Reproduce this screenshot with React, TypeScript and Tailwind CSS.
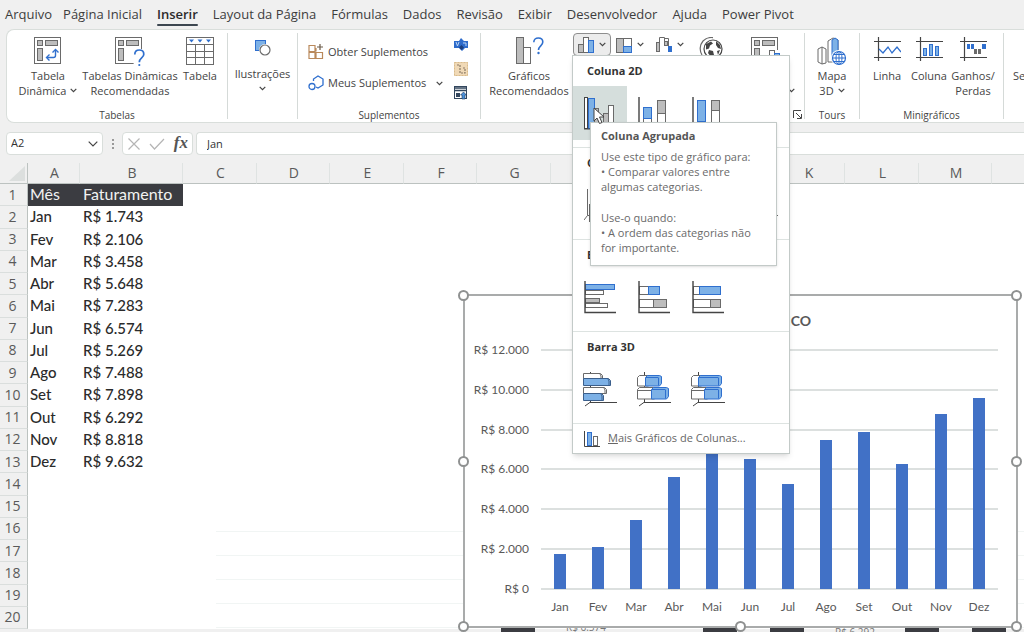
import type { ReactNode } from "react";

const BLUE = "#2f6fce";
const FILL = "#7db1e6";
const GRAY = "#6a6a6a";
const SOFT = "#bdbdbd";
const DARK = "#444444";

/* ---------- small drawing helpers ---------- */

type BoxProps = { x: number; y: number; w: number; h: number; f?: string; s?: string };
const Box = ({ x, y, w, h, f = "#ffffff", s = GRAY }: BoxProps) => (
  <rect x={x + 0.5} y={y + 0.5} width={w - 1} height={h - 1} fill={f} stroke={s} />
);

const Icon = ({ w, h, children }: { w: number; h: number; children: ReactNode }) => (
  <svg width={w} height={h} viewBox={`0 0 ${w} ${h}`} fill="none" className="block shrink-0" aria-hidden="true">
    {children}
  </svg>
);

const Chevron = () => (
  <svg width="7" height="5" viewBox="0 0 7 5" fill="none" className="inline-block shrink-0" aria-hidden="true">
    <path d="M0.7 0.8 3.5 3.6 6.3 0.8" stroke={DARK} strokeWidth="1.2" />
  </svg>
);

/* ---------- ribbon icons ---------- */

const PivotFrame = () => (
  <>
    <Box x={0} y={0} w={27} h={27} />
    <Box x={3} y={3} w={6} h={6} f={SOFT} />
    <Box x={11} y={3} w={13} h={6} f={SOFT} />
    <Box x={3} y={11} w={6} h={13} f={SOFT} />
  </>
);

const PivotIcon = () => (
  <Icon w={28} h={28}>
    <PivotFrame />
    <path d="M13 20.5h6.500a2 2 0 0 0 2-2V13" stroke={BLUE} strokeWidth="1.4" />
    <path d="M15.500 17.500l-3 3 3 3M18.500 15.500l3-3 3 3" stroke={BLUE} strokeWidth="1.4" />
  </Icon>
);

const RecommendedPivotIcon = () => (
  <Icon w={30} h={30}>
    <PivotFrame />
    <path d="M17 12h13v18H19z" fill="#ffffff" />
    <path
      d="M19.800 17.500c0-3 2-4.500 4.500-4.500s4.500 1.600 4.500 4.200c0 3.800-4.500 3.800-4.500 8"
      stroke={BLUE}
      strokeWidth="1.700"
    />
    <circle cx="24.300" cy="28" r="1.100" fill={BLUE} />
  </Icon>
);

const TableIcon = () => (
  <Icon w={28} h={28}>
    <Box x={0} y={0} w={28} h={28} />
    <path d="M0 7.500h28M0 14.500h28M0 20.500h28M9.500 7v21M18.500 7v21" stroke={GRAY} />
    <path d="M3 2.500h5L5.500 5.500zM11.500 2.500h5L14 5.500zM20 2.500h5l-2.500 3z" fill={BLUE} />
  </Icon>
);

const ShapesIcon = () => (
  <Icon w={18} h={18}>
    <Box x={1} y={1} w={11} h={11} f={FILL} s={BLUE} />
    <circle cx="11" cy="11" r="6" fill="#ffffff" />
    <circle cx="11" cy="11" r="5" fill="#ffffff" stroke={GRAY} strokeWidth="1.200" />
  </Icon>
);

const StoreIcon = () => (
  <Icon w={16} h={16}>
    <path d="M1 1.500h6v6H1zM1 8.500h6v6H1zM8 8.500h6.500v6H8zM8 7.500V4" stroke="#b9895b" strokeWidth="1.200" />
    <path d="M12 0v6M9 3h6" stroke="#6b5a48" strokeWidth="1.200" />
  </Icon>
);

const AddinsIcon = () => (
  <Icon w={16} h={16}>
    <path d="M5.500 6V4L10 1l5 3v6l-5 3-2-1" stroke={BLUE} strokeWidth="1.300" />
    <circle cx="4" cy="11.500" r="3" stroke={BLUE} strokeWidth="1.300" />
  </Icon>
);

const VisioIcon = () => (
  <Icon w={14} h={14}>
    <path d="M0 3h5l2-3 3 3h4v7h-3l-3 3-3-3H0z" fill="#2d6bcb" />
    <path d="M2 4l1.500 4L5 4M9 5h3v3" stroke="#bcd6f5" />
    <path d="M7.500 7l2.500 2.500L7.500 12 5 9.500z" fill="#1c3f7d" />
  </Icon>
);

const BingIcon = () => (
  <Icon w={14} h={14}>
    <rect width="14" height="14" fill="#f0d9b6" />
    <path d="M3 3h3v8h5V6H8" stroke="#8b7b66" strokeWidth="1.200" strokeDasharray="2 1" />
    <path d="M0.500 0.500h13v13h-13z" stroke="#d9bb8d" strokeDasharray="2 1" />
  </Icon>
);

const PeopleIcon = () => (
  <Icon w={14} h={14}>
    <rect x="0.500" y="0.500" width="12" height="12" fill="#ffffff" stroke="#33475e" />
    <path d="M0 2h13M0 4.500h13" stroke="#33475e" strokeWidth="1.500" />
    <path d="M2 7h4v4H2z" fill="#33475e" />
    <path d="M9.500 6l3 3h-1.500v4H8V9H6.500z" fill="#4a90d9" stroke="#1d3557" strokeWidth="0.600" />
  </Icon>
);

const RecommendedChartIcon = () => (
  <Icon w={29} h={28}>
    <Box x={1} y={0} w={8} h={27} f={SOFT} />
    <Box x={8} y={10} w={8} h={17} />
    <path
      d="M18.800 5.200C18.800 2.400 20.800 1 23.300 1s4.500 1.500 4.500 4c0 3.700-4.300 4-4.300 8"
      stroke={BLUE}
      strokeWidth="1.600"
    />
    <circle cx="23.500" cy="16" r="1.200" fill={BLUE} />
  </Icon>
);

const ColumnsIcon = () => (
  <Icon w={16} h={16}>
    <Box x={0} y={7} w={6} h={9} f={SOFT} />
    <Box x={5} y={0} w={6} h={16} />
    <Box x={10} y={3} w={6} h={13} f={FILL} s={BLUE} />
  </Icon>
);

const HierarchyIcon = () => (
  <Icon w={16} h={16}>
    <Box x={0} y={1} w={8} h={15} f={SOFT} />
    <Box x={7} y={1} w={9} h={9} />
    <Box x={7} y={9} w={9} h={7} f={FILL} s={BLUE} />
  </Icon>
);

const WaterfallIcon = () => (
  <Icon w={16} h={16}>
    <Box x={0} y={5} w={4} h={10} f={SOFT} />
    <path d="M3.500 8V0.500h5V8" fill="#ffffff" stroke={GRAY} />
    <path d="M8 1.500h4.500V10" stroke={GRAY} />
    <Box x={8} y={4} w={4} h={5} f={SOFT} />
    <rect x="12" y="9" width="4" height="6" fill={BLUE} />
  </Icon>
);

const GlobeMapIcon = () => (
  <Icon w={25} h={28}>
    <path d="M4 4A12 12 0 0 1 14 0.600M4 4a12 12 0 0 0-1 14" stroke={GRAY} strokeWidth="1.200" />
    <circle cx="14" cy="12" r="9" fill="#ffffff" stroke={DARK} strokeWidth="1.200" />
    <path
      d="M7 7l5-2.500 2 2-3 2-1 3-3 1zM17 4l4 4 1 4-3-1-2-3zM10 13l4 1 1 4-3 2-3-4zM18 14l3-1-2 5z"
      fill={DARK}
    />
    <path d="M5 20c4 5 14 5 18-1M14 24v4M9 27.500h10" stroke={GRAY} />
  </Icon>
);

const PivotChartIcon = () => (
  <Icon w={29} h={28}>
    <PivotFrame />
    <rect x="18" y="13" width="11" height="15" fill="#ffffff" />
    <Box x={13} y={18} w={6} h={9} f={SOFT} />
    <Box x={18} y={13} w={6} h={14} />
    <Box x={23} y={16} w={6} h={11} f={FILL} s={BLUE} />
  </Icon>
);

const Map3DIcon = () => (
  <Icon w={30} h={30}>
    <path d="M1 12l4-2 4 2v14l-4 1-4-2z" fill="#ffffff" stroke={GRAY} />
    <path d="M5 10v17" stroke={GRAY} />
    <path d="M11 4l5-3 5 2v22H11z" fill="#ffffff" stroke={GRAY} />
    <path d="M15 3l3-2 3 2v20h-6z" fill={FILL} stroke={BLUE} />
    <circle cx="22" cy="21" r="8" fill="#ffffff" />
    <circle cx="22" cy="21" r="6.500" stroke={BLUE} strokeWidth="1.200" />
    <ellipse cx="22" cy="21" rx="3" ry="6.500" stroke={BLUE} />
    <path d="M15.500 21h13M17 17.500h10M17 24.500h10M22 14.500v13" stroke={BLUE} />
  </Icon>
);

const SparkFrame = () => (
  <path d="M0 4.500h27M0 20.500h27M4.500 0v24" stroke={DARK} strokeWidth="1.200" />
);

const SparkLineIcon = () => (
  <Icon w={27} h={25}>
    <SparkFrame />
    <path d="M5 12l4 4 5-6 4 6 5-6 4 5" stroke={BLUE} strokeWidth="1.300" />
  </Icon>
);

const SparkColumnIcon = () => (
  <Icon w={27} h={25}>
    <SparkFrame />
    <Box x={7} y={11} w={4} h={8} f={FILL} s={BLUE} />
    <Box x={13} y={7} w={4} h={12} f={FILL} s={BLUE} />
    <Box x={19} y={9} w={4} h={10} f={FILL} s={BLUE} />
  </Icon>
);

const SparkWinLossIcon = () => (
  <Icon w={27} h={25}>
    <SparkFrame />
    <path d="M7 7h3v5H7zM11 7h3v5h-3zM22 7h4v5h-4z" fill={BLUE} />
    <path d="M14 12h3v5h-3zM18 12h3v5h-3z" fill={GRAY} />
  </Icon>
);

const LauncherIcon = () => (
  <Icon w={9} h={9}>
    <path d="M0.500 8V0.500H8M3 3l5 5M8.500 4v4.500H4" stroke={DARK} />
  </Icon>
);

/* ---------- chart gallery icons ---------- */

const Axes = () => <path d="M1 0v31.500h31" stroke={DARK} strokeWidth="1.400" />;

const columnIcons = [
  <Icon key="a" w={32} h={33}>
    <Box x={0} y={0} w={4} h={32} f="#ffffff" s={DARK} />
    <Box x={4} y={1} w={7} h={31} f={FILL} s={BLUE} />
    <Box x={10} y={11} w={5} h={21} f={SOFT} />
    <Box x={19} y={16} w={6} h={16} f={SOFT} />
    <Box x={24} y={8} w={6} h={24} />
    <path d="M0 32h32" stroke={DARK} />
  </Icon>,
  <Icon key="b" w={32} h={33}>
    <Axes />
    <Box x={5} y={21} w={9} h={11} />
    <Box x={5} y={10} w={9} h={12} f={FILL} s={BLUE} />
    <Box x={19} y={13} w={9} h={19} />
    <Box x={19} y={3} w={9} h={14} f={SOFT} />
  </Icon>,
  <Icon key="c" w={32} h={33}>
    <Axes />
    <Box x={5} y={24} w={9} h={8} />
    <Box x={5} y={3} w={9} h={22} f={FILL} s={BLUE} />
    <Box x={19} y={13} w={9} h={19} />
    <Box x={19} y={3} w={9} h={11} f={SOFT} />
  </Icon>,
];

const Column3D = () => (
  <Icon w={32} h={33}>
    <path d="M3.500 0v26.500H32M3.500 26.500L0 31" stroke={GRAY} />
    <Box x={5} y={15} w={6} h={18} />
    <Box x={12} y={8} w={6} h={20} f={FILL} s={BLUE} />
    <Box x={20} y={12} w={6} h={16} f={SOFT} />
  </Icon>
);

const barIcons = [
  <Icon key="a" w={32} h={33}>
    <Box x={1} y={3} w={30} h={6} f={FILL} s={BLUE} />
    <Box x={1} y={9} w={19} h={5} />
    <Box x={1} y={17} w={15} h={5} f={SOFT} />
    <Box x={1} y={22} w={23} h={5} />
    <Axes />
  </Icon>,
  <Icon key="b" w={32} h={33}>
    <Box x={1} y={5} w={11} h={9} />
    <Box x={10} y={5} w={12} h={9} f={FILL} s={BLUE} />
    <Box x={1} y={18} w={15} h={9} />
    <Box x={15} y={18} w={14} h={9} f={SOFT} />
    <Axes />
  </Icon>,
  <Icon key="c" w={32} h={33}>
    <Box x={1} y={5} w={7} h={9} />
    <Box x={7} y={5} w={22} h={9} f={FILL} s={BLUE} />
    <Box x={1} y={18} w={18} h={9} />
    <Box x={18} y={18} w={11} h={9} f={SOFT} />
    <Axes />
  </Icon>,
];

const Floor = () => <path d="M7.500 0v30L2 34M7 30.500h27" stroke={DARK} />;
type Bar3DProps = { x: number; y: number; w: number; h: number; f?: string; s?: string; cap?: boolean };
const Bar3D = ({ x, y, w, h, f = "#ffffff", s = GRAY, cap = true }: Bar3DProps) => (
  <>
    <path
      d={`M${x + 0.5} ${y + 2.5}l2-2h${w - 3}l2 1v${h - 4}l-2 2.500h-${w - 1}z`}
      fill={f}
      stroke={s}
      strokeLinejoin="round"
    />
    {cap && <path d={`M${x + 1} ${y + 2.5}h${w - 3}M${x + w - 1.5} ${y + 2.5}v${h - 3}`} stroke={s} />}
  </>
);
/* a bar whose left end is flush with the wall */
const WallBar = ({ y, w, h, f = "#ffffff", s = GRAY }: Omit<Bar3DProps, "x" | "cap">) => (
  <path
    d={`M0.500 ${y + 0.5}h${w - 3}l2 2v${h - 3}h-${w - 1}zM${w - 3} ${y + 1}l1 2v${h - 3}`}
    fill={f}
    stroke={s}
    strokeLinejoin="round"
  />
);

const bar3DIcons = [
  <Icon key="a" w={34} h={35}>
    <Floor />
    <WallBar y={1} w={20} h={6} />
    <WallBar y={6} w={28} h={8} f={FILL} s="#3b5f8c" />
    <WallBar y={15} w={24} h={7} />
    <WallBar y={21} w={21} h={8} f={FILL} s="#3b5f8c" />
  </Icon>,
  <Icon key="b" w={34} h={35}>
    <Floor />
    <Bar3D x={0} y={3} w={12} h={11} cap={false} />
    <Bar3D x={8} y={3} w={15} h={11} f={FILL} s={BLUE} />
    <Bar3D x={0} y={15} w={18} h={12} cap={false} />
    <path d="M1 18.500h14" stroke={GRAY} />
    <Bar3D x={14} y={15} w={16} h={12} f={FILL} s={BLUE} />
  </Icon>,
  <Icon key="c" w={34} h={35}>
    <Floor />
    <Bar3D x={0} y={3} w={11} h={11} cap={false} />
    <Bar3D x={7} y={3} w={22} h={11} f={FILL} s={BLUE} />
    <Bar3D x={0} y={15} w={17} h={12} cap={false} />
    <path d="M1 18.500h13" stroke={GRAY} />
    <Bar3D x={13} y={15} w={16} h={12} f={FILL} s={BLUE} />
  </Icon>,
];

/* ---------- ribbon ---------- */

const tabs = [
  "Página Inicial",
  "Inserir",
  "Layout da Página",
  "Fórmulas",
  "Dados",
  "Revisão",
  "Exibir",
  "Desenvolvedor",
  "Ajuda",
  "Power Pivot",
];

const TabBar = () => (
  <nav className="flex h-[29px] shrink-0 gap-[15px] whitespace-nowrap pl-[5px] text-[13px] leading-[28px] text-[#3d3d3d]">
    <a href="#arquivo" className="-mr-[4px]">
      Arquivo
    </a>
    {tabs.map((tab) =>
      tab === "Inserir" ? (
        <a key={tab} href="#inserir" aria-current="page" className="relative font-semibold text-[#2b2b2b]">
          {tab}
          <span className="absolute inset-x-0 bottom-[3px] h-[2px] rounded bg-[#3c4650]" />
        </a>
      ) : (
        <a key={tab} href="#aba">
          {tab}
        </a>
      ),
    )}
  </nav>
);

const Group = ({ width, label, children }: { width: string; label?: string; children: ReactNode }) => (
  <section className={`relative my-[3px] flex shrink-0 flex-col border-r border-[#d5dad8] ${width}`}>
    <div className="flex min-h-0 flex-1 items-start">{children}</div>
    {label && <h2 className="text-center text-[10px] leading-[8px]">{label}</h2>}
  </section>
);

type BigProps = { icon: ReactNode; lines: string[]; width: string; drop?: boolean };
const BigButton = ({ icon, lines, width, drop }: BigProps) => (
  <button type="button" className={`flex shrink-0 flex-col items-center pt-[4px] leading-[15px] ${width}`}>
    <span className="flex h-[31px] items-start">{icon}</span>
    {lines.map((line, i) => (
      <span key={line} className="flex items-center gap-[4px] whitespace-nowrap">
        {line}
        {drop && i === lines.length - 1 && <Chevron />}
      </span>
    ))}
  </button>
);

const MenuSection = ({ title, children }: { title: string; children: ReactNode }) => (
  <section className="h-[92px] border-b border-[#dde3e1]">
    <h3 className="pl-[14px] text-[11px] font-bold leading-[30px] text-[#333333]">{title}</h3>
    <div className="flex">{children}</div>
  </section>
);

const GalleryItem = ({ label, children }: { label: string; children: ReactNode }) => (
  <button type="button" aria-label={label} className="flex h-[54px] w-[54px] items-center justify-center">
    {children}
  </button>
);

const Tooltip = () => (
  <div
    role="tooltip"
    className="absolute left-[17px] top-[66px] z-10 w-[187px] border border-[#c3cac8] bg-white px-[10px] pb-[10px] pt-[5px] text-[11px] leading-[15px] text-[#6a6a6a] shadow"
  >
    <p className="mb-[6px] font-bold text-[#555555]">Coluna Agrupada</p>
    <p>Use este tipo de gráfico para:</p>
    <p>• Comparar valores entre algumas categorias.</p>
    <p className="mt-[16px]">Use-o quando:</p>
    <p>• A ordem das categorias não for importante.</p>
  </div>
);

const labels = ["Agrupada", "Empilhada", "100% Empilhada"];

const ColumnMenu = () => (
  <div className="absolute left-[-1px] top-[22px] z-30 w-[218px] border border-[#c3cac8] bg-white text-left shadow-md">
    <MenuSection title="Coluna 2D">
      <button
        type="button"
        aria-label="Coluna Agrupada"
        className="flex h-[54px] w-[54px] items-center justify-center bg-[#d5dedc]"
      >
        {columnIcons[0]}
      </button>
      <GalleryItem label="Coluna Empilhada">{columnIcons[1]}</GalleryItem>
      <GalleryItem label="Coluna 100% Empilhada">{columnIcons[2]}</GalleryItem>
    </MenuSection>
    <MenuSection title="Coluna 3D">
      {[...labels, "3D"].map((l) => (
        <GalleryItem key={l} label={`Coluna 3D ${l}`}>
          <Column3D />
        </GalleryItem>
      ))}
    </MenuSection>
    <MenuSection title="Barra 2D">
      {barIcons.map((icon, i) => (
        <GalleryItem key={labels[i]} label={`Barra ${labels[i]}`}>
          {icon}
        </GalleryItem>
      ))}
    </MenuSection>
    <MenuSection title="Barra 3D">
      {bar3DIcons.map((icon, i) => (
        <GalleryItem key={labels[i]} label={`Barra 3D ${labels[i]}`}>
          {icon}
        </GalleryItem>
      ))}
    </MenuSection>
    <button type="button" className="flex h-[29px] w-full items-center gap-[8px] pl-[11px] text-[11px] text-[#666666]">
      <Icon w={16} h={16}>
        <path d="M0.500 0v15.500H16" stroke={DARK} />
        <Box x={3} y={1} w={5} h={14} f={FILL} s={BLUE} />
        <Box x={9} y={5} w={5} h={10} />
      </Icon>
      <span>
        <u>M</u>ais Gráficos de Colunas...
      </span>
    </button>
    <Tooltip />
    <svg
      width="12"
      height="18"
      viewBox="0 0 12 18"
      className="absolute left-[20px] top-[51px] z-20"
      aria-hidden="true"
    >
      <path d="M1 1v13l3-3 2.500 5.500 2.500-1L6.500 10H11z" fill="#ffffff" stroke="#444444" />
    </svg>
  </div>
);

const ChartButtons = () => (
  <div className="flex gap-[4px] pl-[1px]">
    <div className="relative">
      <button
        type="button"
        aria-label="Gráfico de Colunas ou Barras"
        aria-expanded="true"
        className="flex h-[23px] w-[38px] items-center justify-center gap-[5px] rounded-[4px] border border-[#8e8e8e] bg-[#ececec]"
      >
        <ColumnsIcon />
        <Chevron />
      </button>
      <ColumnMenu />
    </div>
    <button type="button" aria-label="Gráfico de Hierarquia" className="flex h-[23px] w-[36px] items-center gap-[5px] pl-[1px]">
      <HierarchyIcon />
      <Chevron />
    </button>
    <button type="button" aria-label="Gráfico de Cascata" className="flex h-[23px] w-[36px] items-center gap-[5px] pl-[1px]">
      <WaterfallIcon />
      <Chevron />
    </button>
  </div>
);

const Ribbon = () => (
  <div className="relative z-20 ml-[6px] flex h-[94px] shrink-0 rounded-l-[8px] border border-r-0 border-[#d9dedb] bg-white text-[11px] text-[#444444]">
    <Group width="w-[221px]" label="Tabelas">
      <div className="flex pl-[9px]">
        <BigButton icon={<PivotIcon />} lines={["Tabela", "Dinâmica"]} width="w-[64px]" drop />
        <BigButton icon={<RecommendedPivotIcon />} lines={["Tabelas Dinâmicas", "Recomendadas"]} width="w-[100px]" />
        <BigButton icon={<TableIcon />} lines={["Tabela"]} width="w-[40px]" />
      </div>
    </Group>
    <Group width="w-[70px]">
      <button type="button" className="flex w-full flex-col items-center gap-[5px] pt-[6px] leading-[15px]">
        <ShapesIcon />
        <span className="pt-[4px]">Ilustrações</span>
        <Chevron />
      </button>
    </Group>
    <Group width="w-[183px]" label="Suplementos">
      <div className="flex w-[145px] flex-col gap-[7px] pl-[10px] pt-[7px]">
        <button type="button" className="flex h-[24px] items-center gap-[4px] whitespace-nowrap">
          <StoreIcon />
          Obter Suplementos
        </button>
        <button type="button" className="flex h-[24px] items-center gap-[4px] whitespace-nowrap">
          <AddinsIcon />
          <span className="flex-1 text-left">Meus Suplementos</span>
          <Chevron />
        </button>
      </div>
      <div className="flex flex-col gap-[10px] pl-[11px] pt-[5px]">
        <button type="button" aria-label="Visio">
          <VisioIcon />
        </button>
        <button type="button" aria-label="Bing Mapas">
          <BingIcon />
        </button>
        <button type="button" aria-label="Gráfico de Pessoas">
          <PeopleIcon />
        </button>
      </div>
    </Group>
    <Group width="w-[324px]" label="Gráficos">
      <BigButton icon={<RecommendedChartIcon />} lines={["Gráficos", "Recomendados"]} width="ml-[5px] w-[86px]" />
      <ChartButtons />
      <BigButton icon={<GlobeMapIcon />} lines={["Mapas"]} width="w-[40px]" drop />
      <BigButton icon={<PivotChartIcon />} lines={["Gráfico", "Dinâmico"]} width="w-[68px]" drop />
      <button type="button" aria-label="Todos os gráficos" className="absolute bottom-[0px] right-[2px]">
        <LauncherIcon />
      </button>
    </Group>
    <Group width="w-[55px]" label="Tours">
      <BigButton icon={<Map3DIcon />} lines={["Mapa", "3D"]} width="w-full" drop />
    </Group>
    <Group width="w-[144px]" label="Minigráficos">
      <div className="flex pl-[6px]">
        <BigButton icon={<SparkLineIcon />} lines={["Linha"]} width="w-[42px]" />
        <BigButton icon={<SparkColumnIcon />} lines={["Coluna"]} width="w-[42px]" />
        <BigButton icon={<SparkWinLossIcon />} lines={["Ganhos/", "Perdas"]} width="w-[46px]" />
      </div>
    </Group>
    <div className="min-w-0 flex-1 overflow-hidden pl-[9px] pt-[38px] leading-[15px]">Segmentação</div>
  </div>
);

/* ---------- formula bar ---------- */

const FormulaBar = () => (
  <div className="flex h-[40px] shrink-0 pt-[9px] text-[11px] text-[#333333]">
    <div className="ml-[6px] flex h-[23px] w-[97px] items-center rounded-[4px] border border-[#d9dedb] bg-white pl-[4px] pr-[4px]">
      <input aria-label="Caixa de nome" defaultValue="A2" className="w-full min-w-0 bg-transparent outline-none" />
      <button type="button" aria-label="Abrir lista de nomes">
        <Icon w={10} h={6}>
          <path d="M0.700 0.700L5 5l4.300-4.300" stroke={DARK} strokeWidth="1.200" />
        </Icon>
      </button>
    </div>
    <div className="flex h-[23px] w-[19px] flex-col items-center justify-center gap-[2px]">
      <span className="h-[2px] w-[2px] bg-[#999999]" />
      <span className="h-[2px] w-[2px] bg-[#999999]" />
      <span className="h-[2px] w-[2px] bg-[#999999]" />
    </div>
    <div className="flex h-[23px] w-[71px] items-center justify-between rounded-[4px] border border-[#d9dedb] bg-white px-[4px]">
      <button type="button" aria-label="Cancelar">
        <Icon w={14} h={14}>
          <path d="M1.500 1.500l11 11M12.500 1.500l-11 11" stroke="#b5b5b5" strokeWidth="1.200" />
        </Icon>
      </button>
      <button type="button" aria-label="Inserir">
        <Icon w={16} h={12}>
          <path d="M1 6l4.500 5L15 1" stroke="#b5b5b5" strokeWidth="1.200" />
        </Icon>
      </button>
      <button
        type="button"
        className="pb-[2px] font-['Liberation_Serif',serif] text-[17px] font-bold italic leading-[18px] text-[#555555]"
      >
        fx
      </button>
    </div>
    <input
      aria-label="Barra de fórmulas"
      defaultValue="Jan"
      className="ml-[3px] h-[23px] min-w-0 flex-1 rounded-l-[4px] border border-r-0 border-[#d9dedb] bg-white pl-[10px] outline-none"
    />
  </div>
);

/* ---------- sheet ---------- */

const months = [
  { name: "Jan", value: 1743 },
  { name: "Fev", value: 2106 },
  { name: "Mar", value: 3458 },
  { name: "Abr", value: 5648 },
  { name: "Mai", value: 7283 },
  { name: "Jun", value: 6574 },
  { name: "Jul", value: 5269 },
  { name: "Ago", value: 7488 },
  { name: "Set", value: 7898 },
  { name: "Out", value: 6292 },
  { name: "Nov", value: 8818 },
  { name: "Dez", value: 9632 },
];

const money = (n: number) => "R$ " + String(n).replace(/(\d)(\d{3})$/, "$1.$2");

const otherColumns = "CDEFGHIJKLMN".split("");
const rowNumbers = Array.from({ length: 20 }, (_, i) => i + 1);

const Grid = () => (
  <table className="h-[466px] w-[1066px] table-fixed border-separate border-spacing-0 bg-white text-left">
    <colgroup>
      <col className="w-[28px]" />
      <col className="w-[52px]" />
      <col className="w-[103px]" />
      {otherColumns.map((c) => (
        <col key={c} />
      ))}
    </colgroup>
    <thead>
      <tr className="h-[21px] bg-[#f0f0f0] text-center text-[14px] leading-[18px] text-[#5a5a5a]">
        <th scope="col" aria-label="Selecionar tudo" className="border-b border-r border-[#bcc2c0] p-0">
          <svg width="16" height="15" viewBox="0 0 16 15" className="ml-[9px] block" aria-hidden="true">
            <path d="M16 0v15H0z" fill="#dcdfde" />
          </svg>
        </th>
        {["A", "B", ...otherColumns].map((c) => (
          <th
            key={c}
            scope="col"
            className="border-b border-r border-b-[#bcc2c0] border-r-[#dfe3e2] p-0 pl-[2px] font-normal"
          >
            {c}
          </th>
        ))}
      </tr>
    </thead>
    <tbody className="font-['Lato',sans-serif] leading-[16px] text-[#2b2b2b]">
      {rowNumbers.map((n) => {
        const month = months[n - 2];
        return (
          <tr key={n}>
            <th
              scope="row"
              className="border-b border-r border-b-[#dadedd] border-r-[#bcc2c0] bg-[#f0f0f0] p-0 pr-[2px] text-center font-['Open_Sans',sans-serif] text-[14px] font-normal leading-[18px] text-[#5a5a5a]"
            >
              {n}
            </th>
            {n === 1 ? (
              <>
                <td className="bg-[#3b3c41] p-0 pb-[2px] pl-[2px] text-[16px] text-[#f2f2f2]">Mês</td>
                <td className="bg-[#3b3c41] p-0 pb-[2px] pl-[3px] text-[16px] text-[#f2f2f2]">Faturamento</td>
              </>
            ) : (
              <>
                <td className="p-0 pb-[2px] pl-[2px] text-[15px] font-medium">{month?.name}</td>
                <td className="p-0 pb-[2px] pl-[3px] text-[15px] font-medium">{month && money(month.value)}</td>
              </>
            )}
            <td colSpan={12} className="p-0" />
          </tr>
        );
      })}
    </tbody>
  </table>
);

const Chart = () => (
  <figure className="absolute left-[463px] top-[131px] h-[334px] w-[555px] border-2 border-[#a9abab] bg-white">
    <svg
      width="551"
      height="330"
      viewBox="0 0 551 330"
      className="block font-['Lato',sans-serif]"
      role="img"
      aria-label="Faturamento por mês"
    >
      <text x="346" y="30" textAnchor="end" fontSize="14" fontWeight="700" fill="#595959">
        TÍTULO DO GRÁFICO
      </text>
      {[0, 1, 2, 3, 4, 5, 6].map((i) => {
        const y = Math.round(293 - i * 39.85);
        return (
          <g key={i}>
            <rect x="76" y={y - 1} width="457" height="2" fill="#dce0df" />
            <text x="64" y={y + 4} textAnchor="end" fontSize="12" fill="#595959">
              {i === 0 ? "R$ 0" : money(i * 2000)}
            </text>
          </g>
        );
      })}
      {months.map((m, i) => {
        const x = Math.round(95 + i * 38.05);
        const h = Math.round((m.value / 2000) * 39.7);
        return (
          <g key={m.name}>
            <rect x={x - 6} y={293 - h} width="12" height={h} fill="#4171c6" />
            <text x={x} y="315" textAnchor="middle" fontSize="12" fill="#595959">
              {m.name}
            </text>
          </g>
        );
      })}
    </svg>
    {[
      "left-[-7px] top-[-6px]",
      "right-[-6px] top-[-6px]",
      "left-[-7px] top-[160px]",
      "right-[-6px] top-[160px]",
      "left-[-7px] bottom-[-6px]",
      "left-[270px] bottom-[-6px]",
      "right-[-6px] bottom-[-6px]",
    ].map((place) => (
      <span key={place} className={`absolute size-[11px] rounded-full border-2 border-[#8f9191] bg-white ${place}`} />
    ))}
  </figure>
);

const LowerTable = () => (
  <div className="absolute left-[501px] top-[463px] flex h-[20px] w-[505px] items-start text-[10px] leading-[10px] text-[#777777]">
    <span className="h-full w-[34px] bg-[#3b3c41]" />
    <span className="-mt-[4px] ml-[31px] w-[137px]">R$ 6.574</span>
    <span className="h-full w-[34px] bg-[#3b3c41]" />
    <span className="ml-[33px] h-full w-[34px] bg-[#3b3c41]" />
    <span className="ml-[31px] mt-[1px] w-[70px]">R$ 6.292</span>
    <span className="h-full w-[34px] bg-[#3b3c41]" />
    <span className="ml-[33px] h-full w-[34px] bg-[#3b3c41]" />
  </div>
);

const Sheet = () => (
  <main className="relative min-h-0 flex-1 overflow-hidden">
    <Grid />
    <div className="absolute left-[216px] right-0 top-[368px]">
      {[16, 17, 18, 19, 20].map((n) => (
        <div key={n} className="h-[24px] border-t border-[#f1f5f4]" />
      ))}
    </div>
    <LowerTable />
    <Chart />
  </main>
);

export default function App() {
  return (
    <div className="flex h-screen flex-col overflow-hidden bg-[#f0f0f0] font-['Open_Sans','Noto_Sans',sans-serif]">
      <TabBar />
      <Ribbon />
      <FormulaBar />
      <Sheet />
    </div>
  );
}
